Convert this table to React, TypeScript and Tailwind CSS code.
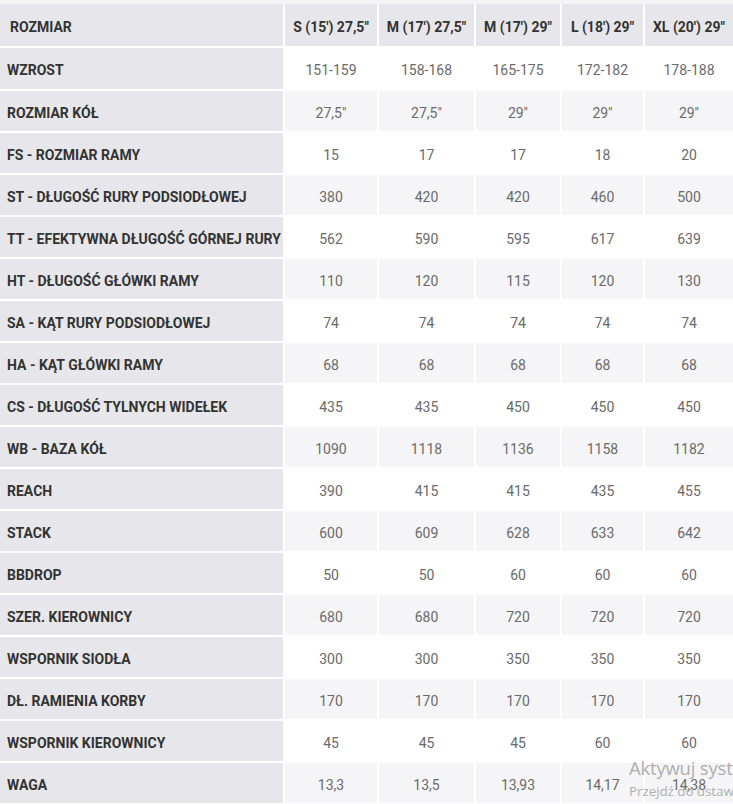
import React from "react";

const header = ["ROZMIAR", "S (15') 27,5\"", "M (17') 27,5\"", "M (17') 29\"", "L (18') 29\"", "XL (20') 29\""];

const rows: string[][] = [
  ["WZROST", "151-159", "158-168", "165-175", "172-182", "178-188"],
  ["ROZMIAR KÓŁ", "27,5\"", "27,5\"", "29\"", "29\"", "29\""],
  ["FS - ROZMIAR RAMY", "15", "17", "17", "18", "20"],
  ["ST - DŁUGOŚĆ RURY PODSIODŁOWEJ", "380", "420", "420", "460", "500"],
  ["TT - EFEKTYWNA DŁUGOŚĆ GÓRNEJ RURY", "562", "590", "595", "617", "639"],
  ["HT - DŁUGOŚĆ GŁÓWKI RAMY", "110", "120", "115", "120", "130"],
  ["SA - KĄT RURY PODSIODŁOWEJ", "74", "74", "74", "74", "74"],
  ["HA - KĄT GŁÓWKI RAMY", "68", "68", "68", "68", "68"],
  ["CS - DŁUGOŚĆ TYLNYCH WIDEŁEK", "435", "435", "450", "450", "450"],
  ["WB - BAZA KÓŁ", "1090", "1118", "1136", "1158", "1182"],
  ["REACH", "390", "415", "415", "435", "455"],
  ["STACK", "600", "609", "628", "633", "642"],
  ["BBDROP", "50", "50", "60", "60", "60"],
  ["SZER. KIEROWNICY", "680", "680", "720", "720", "720"],
  ["WSPORNIK SIODŁA", "300", "300", "350", "350", "350"],
  ["DŁ. RAMIENIA KORBY", "170", "170", "170", "170", "170"],
  ["WSPORNIK KIEROWNICY", "45", "45", "45", "60", "60"],
  ["WAGA", "13,3", "13,5", "13,93", "14,17", "14,38"],
];

export default function App() {
  return (
    <div
      className="relative w-[733px] h-[804px] overflow-hidden bg-white"
      style={{ fontFamily: "Roboto, 'Noto Sans', sans-serif" }}
    >
      <div className="h-[4px] bg-[#f4f4f6]" />
      <div className="grid grid-cols-[283px_92px_95px_84px_81px_88px] gap-[2px] bg-white">
        {header.map((h, i) => (
          <div
            key={"h" + i}
            className={
              i === 0
                ? "h-[42px] pt-[4px] bg-[#e7e7eb] flex items-center pl-[10px] text-[14px] font-bold text-[#333]"
                : "h-[42px] pt-[4px] bg-[#e7e7eb] flex items-center justify-center text-[14px] font-bold text-[#333] whitespace-nowrap"
            }
          >
            {h}
          </div>
        ))}
        {rows.map((r, ri) => (
          <React.Fragment key={ri}>
            {r.map((c, ci) => {
              const h = ri === 0 ? "h-[41px]" : "h-[40px]";
              if (ci === 0) {
                return (
                  <div
                    key={ci}
                    className={h + " pt-[4px] bg-[#e7e7eb] flex items-center pl-[7px] text-[14px] font-bold text-[#333] whitespace-nowrap"}
                  >
                    {c}
                  </div>
                );
              }
              const bg = ri % 2 === 0 ? " bg-white" : " bg-[#f5f5f7]";
              return (
                <div
                  key={ci}
                  className={h + bg + " pt-[4px] flex items-center justify-center text-[14px] text-[#6a6a6a] whitespace-nowrap"}
                >
                  {c}
                </div>
              );
            })}
          </React.Fragment>
        ))}
      </div>
      <div
        className="absolute left-[629px] top-[757px] whitespace-nowrap text-[#9a9a9a]/80 pointer-events-none"
        style={{ fontFamily: "'Open Sans', 'Noto Sans', sans-serif" }}
      >
        <div className="text-[18.5px] leading-[22px] tracking-[-0.2px]">Aktywuj system Windows</div>
        <div className="text-[13.5px] leading-[25px] tracking-[-0.1px]">Przejdź do ustawień, aby aktywować system Windows.</div>
      </div>
    </div>
  );
}
